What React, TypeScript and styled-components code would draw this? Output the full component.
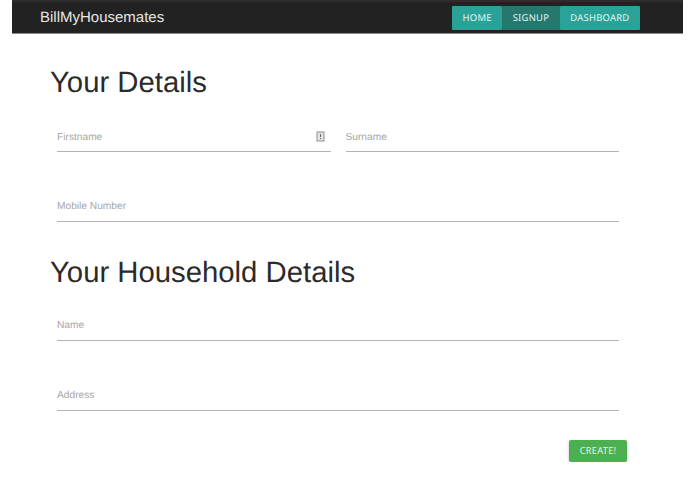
import styled, { createGlobalStyle } from "styled-components";

const GlobalStyle = createGlobalStyle`
  html, body {
    margin: 0;
    background: #fff;
    font-family: "Liberation Sans", Arial, sans-serif;
    text-rendering: geometricPrecision;
  }
`;

const Page = styled.div`
  width: 671px;
  margin: 0 12px;
`;

const NavBar = styled.div`
  display: flex;
  justify-content: space-between;
  align-items: center;
  height: 34px;
  padding: 0 43px 0 28px;
  box-sizing: border-box;
  background: #222;
  border-top: 2px solid #2d2d2d;
  border-bottom: 1px solid #8a8a8a;
`;

const Brand = styled.div`
  font-size: 15px;
  color: #e6e6e6;
`;

const NavLinks = styled.div`
  display: flex;
`;

const NavLink = styled.div<{ $active?: boolean }>`
  height: 24px;
  padding: 0 10.5px;
  display: flex;
  align-items: center;
  font-family: "Noto Sans", sans-serif;
  font-size: 9.45px;
  letter-spacing: 0.25px;
  color: #e4f3f1;
  border-radius: 1px;
  background: ${(p) => (p.$active ? "#26786f" : "#2ba297")};
`;

const Content = styled.div`
  padding: 0 56px 0 38px;
`;

const Heading = styled.h1<{ $top: number }>`
  margin: ${(p) => p.$top}px 0 0;
  font-size: 29.3px;
  line-height: 38px;
  font-weight: 400;
  color: #2b2b2b;
`;

const Row = styled.div`
  display: flex;
  gap: 15px;
  padding: 0 8px 0 7px;
`;

const Field = styled.div<{ $top: number }>`
  flex: 1;
  height: 31px;
  margin-top: ${(p) => p.$top}px;
  display: flex;
  align-items: center;
  justify-content: space-between;
  border-bottom: 1px solid #b4b4b4;
`;

const Label = styled.span`
  padding-top: 3px;
  font-size: 10.2px;
  color: #a6a6a6;
`;

const KeyIcon = styled.svg`
  width: 9px;
  height: 11px;
  margin: 1px 6px 0 0;
`;

const Actions = styled.div`
  display: flex;
  justify-content: flex-end;
  margin-top: 29px;
`;

const CreateButton = styled.button`
  width: 58px;
  height: 22px;
  padding: 0;
  border: none;
  border-radius: 2px;
  background: #4caf50;
  color: #e9f6ea;
  font-family: "Noto Sans", sans-serif;
  font-size: 9.2px;
  letter-spacing: 0.3px;
  box-shadow: 0 1px 3px rgba(0, 0, 0, 0.25);
`;

export default function App() {
  return (
    <>
      <GlobalStyle />
      <Page>
        <NavBar>
          <Brand>BillMyHousemates</Brand>
          <NavLinks>
            <NavLink>HOME</NavLink>
            <NavLink $active>SIGNUP</NavLink>
            <NavLink>DASHBOARD</NavLink>
          </NavLinks>
        </NavBar>
        <Content>
          <Heading $top={30}>Your Details</Heading>
          <Row>
            <Field $top={18}>
              <Label>Firstname</Label>
              <KeyIcon viewBox="0 0 9 11">
                <rect x="1" y="1" width="7" height="9" fill="#e4e4e4" stroke="#8f8f8f" />
                <rect x="4" y="3" width="1" height="3" fill="#666" />
                <rect x="4" y="7" width="1" height="1" fill="#666" />
              </KeyIcon>
            </Field>
            <Field $top={18}>
              <Label>Surname</Label>
            </Field>
          </Row>
          <Row>
            <Field $top={37.5}>
              <Label>Mobile Number</Label>
            </Field>
          </Row>
          <Heading $top={32}>Your Household Details</Heading>
          <Row>
            <Field $top={17}>
              <Label>Name</Label>
            </Field>
          </Row>
          <Row>
            <Field $top={38}>
              <Label>Address</Label>
            </Field>
          </Row>
          <Actions>
            <CreateButton>CREATE!</CreateButton>
          </Actions>
        </Content>
      </Page>
    </>
  );
}
